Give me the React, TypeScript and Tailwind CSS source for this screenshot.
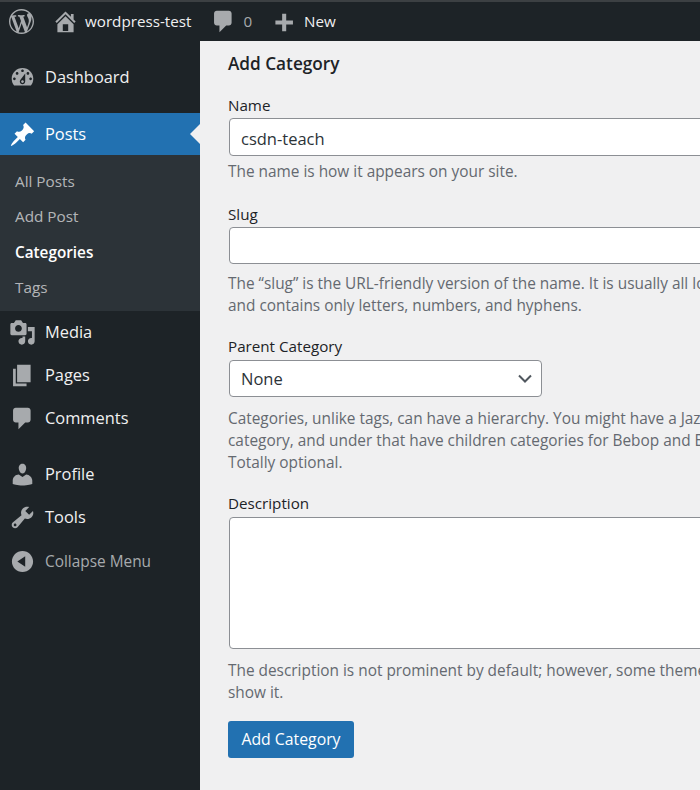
import React from "react";

const paths: Record<string, string> = {
  wp: "M20 10c0-5.51-4.49-10-10-10C4.48 0 0 4.49 0 10c0 5.52 4.48 10 10 10 5.51 0 10-4.48 10-10zM7.78 15.37L4.37 6.22c.55-.02 1.17-.08 1.17-.08.5-.06.44-1.13-.06-1.11 0 0-1.45.11-2.37.11-.18 0-.37 0-.58-.01C4.12 2.69 6.87 1.11 10 1.11c2.33 0 4.45.87 6.05 2.34-.68-.11-1.65.39-1.65 1.58 0 .74.45 1.36.9 2.1.35.61.55 1.36.55 2.46 0 1.49-1.4 5-1.4 5l-3.03-8.37c.54-.02.82-.17.82-.17.5-.05.44-1.25-.06-1.22 0 0-1.44.12-2.38.12-.87 0-2.33-.12-2.33-.12-.5-.03-.56 1.2-.06 1.22l.92.08 1.26 3.41zM17.41 10c.24-.64.74-1.87.43-4.25.7 1.29 1.05 2.71 1.05 4.25 0 3.29-1.73 6.24-4.4 7.78.97-2.59 1.94-5.2 2.92-7.78zM6.1 18.09C3.12 16.65 1.11 13.53 1.11 10c0-1.3.23-2.48.72-3.59C3.25 10.3 4.67 14.2 6.1 18.09zm4.03-6.63l2.58 6.98c-.86.29-1.76.45-2.71.45-.79 0-1.57-.11-2.29-.33.81-2.38 1.62-4.74 2.42-7.1z",
  home: "M16 8.5l1.53 1.53-1.06 1.06L10 4.62l-6.47 6.47-1.06-1.06L10 2.5l4 4v-2h2v4zm-6-2.46l6 5.99V18H4v-5.97zM12 17v-5H8v5h4z",
  comment: "M5 2h9c1.1 0 2 .9 2 2v7c0 1.1-.9 2-2 2h-2l-5 5v-5H5c-1.1 0-2-.9-2-2V4c0-1.1.9-2 2-2z",
  plus: "M17 7v3h-5v5H9v-5H4V7h5V2h3v5h5z",
  dashboard: "M3.76 16h12.48c1.1-1.37 1.76-3.11 1.76-5 0-4.42-3.58-8-8-8s-8 3.58-8 8c0 1.89.66 3.63 1.76 5zM10 4c.55 0 1 .45 1 1s-.45 1-1 1-1-.45-1-1 .45-1 1-1zM6 6c.55 0 1 .45 1 1s-.45 1-1 1-1-.45-1-1 .45-1 1-1zm8 0c.55 0 1 .45 1 1s-.45 1-1 1-1-.45-1-1 .45-1 1-1zm-5.37 5.55L12 7v6c0 1.1-.9 2-2 2s-2-.9-2-2c0-.57.24-1.08.63-1.45zM4 10c.55 0 1 .45 1 1s-.45 1-1 1-1-.45-1-1 .45-1 1-1zm12 0c.55 0 1 .45 1 1s-.45 1-1 1-1-.45-1-1 .45-1 1-1zm-5 3c0-.55-.45-1-1-1s-1 .45-1 1 .45 1 1 1 1-.45 1-1z",
  pin: "M10.44 3.02l1.82-1.82 6.36 6.35-1.83 1.82c-1.05-.68-2.48-.57-3.41.36l-.75.75c-.92.93-1.04 2.35-.35 3.41l-1.83 1.82-2.41-2.41-2.8 2.79c-.42.42-3.38 2.71-3.8 2.29s1.86-3.39 2.28-3.81l2.79-2.79L4.1 9.36l1.83-1.82c1.05.69 2.48.57 3.4-.36l.75-.75c.93-.92 1.05-2.35.36-3.41z",
  media: "M13 11V4c0-.55-.45-1-1-1h-1.67L9 1H5L3.67 3H2c-.55 0-1 .45-1 1v7c0 .55.45 1 1 1h10c.55 0 1-.45 1-1zM7 4.5c1.38 0 2.5 1.12 2.5 2.5S8.38 9.5 7 9.5 4.5 8.38 4.5 7 5.62 4.5 7 4.5zM14 6h5v10.5c0 1.38-1.12 2.5-2.5 2.5S14 17.88 14 16.5s1.12-2.5 2.5-2.5c.17 0 .34.02.5.05V9h-3V6zm-4 8.05V13h2v3.5c0 1.38-1.12 2.5-2.5 2.5S7 17.88 7 16.5 8.12 14 9.5 14c.17 0 .34.02.5.05z",
  pages: "M6 15V2h10v13H6zm-1 1h8v2H3V5h2v11z",
  profile: "M10 9.25c-2.27 0-2.73-3.44-2.73-3.44C7 4.02 7.82 2 9.97 2c2.16 0 2.98 2.02 2.71 3.81 0 0-.41 3.44-2.68 3.44zm0 2.57L12.72 10c2.39 0 4.52 2.33 4.52 4.53v2.49s-3.65 1.13-7.24 1.13c-3.65 0-7.24-1.13-7.24-1.13v-2.49c0-2.25 1.94-4.48 4.47-4.48z",
  tools: "M16.68 9.77c-1.34 1.34-3.3 1.67-4.95.99l-5.41 6.52c-.99.99-2.59.99-3.58 0s-.99-2.59 0-3.57l6.52-5.42c-.68-1.65-.35-3.61.99-4.95 1.28-1.28 3.12-1.62 4.72-1.06l-2.89 2.89 2.82 2.82 2.86-2.87c.53 1.58.18 3.39-1.08 4.65zM3.81 16.21c.4.39 1.04.39 1.43 0 .4-.4.4-1.04 0-1.43-.39-.4-1.03-.4-1.43 0-.39.39-.39 1.03 0 1.43z",
  collapse: "M10 2.16c4.33 0 7.84 3.51 7.84 7.84s-3.51 7.84-7.84 7.84S2.16 14.33 2.16 10 5.71 2.16 10 2.16zm2 11.72V6.12L6.18 9.97z",
};

function Icon({ name, className }: { name: string; className: string }) {
  return (
    <svg viewBox="0 0 20 20" className={className} fill="currentColor" fillRule="evenodd">
      <path d={paths[name]} />
    </svg>
  );
}

function MenuItem({ icon, label, active }: { icon: string; label: string; active?: boolean }) {
  return (
    <div className={`relative flex items-center ${active ? "h-[42px] bg-[#2271b1] text-white" : "h-[43px] text-[#f0f0f1]"}`}>
      <span className="flex w-[45px] shrink-0 justify-center">
        <Icon name={icon} className={`h-[27px] w-[27px] ${active ? "text-white" : "text-[#a7aaad]"}`} />
      </span>
      <span className="text-[16.4px]">{label}</span>
      {active && (
        <span className="absolute right-0 top-1/2 h-0 w-0 -translate-y-1/2 border-y-[10px] border-r-[10px] border-y-transparent border-r-[#f0f0f1]" />
      )}
    </div>
  );
}

function Help({ lines }: { lines: string[] }) {
  return (
    <div className="pt-[1px] text-[15.4px] leading-[22px] text-[#646970]">
      {lines.map((l) => (
        <div key={l} className="whitespace-nowrap">{l}</div>
      ))}
    </div>
  );
}

export default function App() {
  return (
    <div className="flex h-[790px] w-[700px] flex-col overflow-hidden bg-[#f0f0f1] font-['Open_Sans',sans-serif]">
      <header className="flex h-[41px] shrink-0 items-center border-t-2 border-[#3c4043] bg-[#1d2327] text-[15.2px] text-[#f0f0f1]">
        <Icon name="wp" className="ml-[9px] h-[25px] w-[25px] text-[#a7aaad]" />
        <Icon name="home" className="ml-[18px] h-[27px] w-[27px] text-[#a7aaad]" />
        <span className="ml-[6px]">wordpress-test</span>
        <Icon name="comment" className="ml-[19px] h-[27px] w-[27px] text-[#a7aaad]" />
        <span className="ml-[6px] text-[#a7aaad]">0</span>
        <Icon name="plus" className="ml-[18px] mt-[5px] h-[27px] w-[27px] text-[#a7aaad]" />
        <span className="ml-[7px]">New</span>
      </header>
      <div className="flex min-h-0 flex-1">
        <aside className="w-[200px] shrink-0 bg-[#1d2327] pt-[15px]">
          <MenuItem icon="dashboard" label="Dashboard" />
          <div className="h-[14px]" />
          <MenuItem icon="pin" label="Posts" active />
          <div className="flex h-[156px] flex-col bg-[#2c3338] pt-[9px] text-[15.3px] text-[#f0f0f1b3]">
            <div className="flex h-[35px] items-center pl-[15px]">All Posts</div>
            <div className="flex h-[35px] items-center pl-[15px]">Add Post</div>
            <div className="flex h-[36px] items-center pl-[15px] font-semibold text-white">Categories</div>
            <div className="flex h-[35px] items-center pl-[15px]">Tags</div>
          </div>
          <MenuItem icon="media" label="Media" />
          <MenuItem icon="pages" label="Pages" />
          <MenuItem icon="comment" label="Comments" />
          <div className="h-[13px]" />
          <MenuItem icon="profile" label="Profile" />
          <MenuItem icon="tools" label="Tools" />
          <div className="flex h-[45px] items-center text-[#a7aaad]">
            <span className="flex w-[45px] shrink-0 justify-center">
              <Icon name="collapse" className="h-[27px] w-[27px] text-[#a7aaad]" />
            </span>
            <span className="text-[15.4px]">Collapse Menu</span>
          </div>
        </aside>
        <main className="min-w-0 flex-1 overflow-hidden pl-[28px] text-[#1d2327]">
          <h2 className="mt-[10px] text-[17.2px] font-semibold leading-[26px]">Add Category</h2>
          <div className="mt-[18px] text-[15.2px] leading-[20px]">Name</div>
          <input readOnly value="csdn-teach" className="ml-[1px] mt-[3px] block h-[38px] w-[600px] rounded-[4px] border border-[#8c8f94] bg-white px-[11px] pt-[2px] text-[16.5px] text-[#2c3338] outline-none" />
          <div className="mt-[4px]"><Help lines={["The name is how it appears on your site."]} /></div>
          <div className="mt-[21px] text-[15.2px] leading-[20px]">Slug</div>
          <input readOnly value="" className="ml-[1px] mt-[3px] block h-[37px] w-[600px] rounded-[4px] border border-[#8c8f94] bg-white px-[11px] text-[16.5px] outline-none" />
          <div className="mt-[8px]"><Help lines={["The “slug” is the URL-friendly version of the name. It is usually all lowercase", "and contains only letters, numbers, and hyphens."]} /></div>
          <div className="mt-[19px] text-[15.2px] leading-[20px]">Parent Category</div>
          <div className="relative ml-[1px] mt-[4px] h-[37px] w-[313px]">
            <select className="block h-full w-full appearance-none rounded-[4px] border border-[#8c8f94] bg-white px-[11px] pt-[2px] text-[16.5px] text-[#2c3338] outline-none">
              <option>None</option>
            </select>
            <svg viewBox="0 0 14 9" className="pointer-events-none absolute right-[10px] top-[14px] h-[9px] w-[14px] text-[#50575e]" fill="none" stroke="currentColor" strokeWidth="2">
              <path d="M1 1.5l6 6 6-6" />
            </svg>
          </div>
          <div className="mt-[10px]"><Help lines={["Categories, unlike tags, can have a hierarchy. You might have a Jazz", "category, and under that have children categories for Bebop and Big Band.", "Totally optional."]} /></div>
          <div className="mt-[19px] text-[15.2px] leading-[20px]">Description</div>
          <textarea readOnly className="ml-[1px] mt-[4px] block h-[132px] w-[600px] resize-none rounded-[4px] border border-[#8c8f94] bg-white outline-none" />
          <div className="mt-[10px]"><Help lines={["The description is not prominent by default; however, some themes may", "show it."]} /></div>
          <button className="mt-[17px] flex h-[37px] w-[126px] items-center justify-center rounded-[3px] bg-[#2271b1] pt-[1px] text-[15.8px] text-white">Add Category</button>
        </main>
      </div>
    </div>
  );
}
